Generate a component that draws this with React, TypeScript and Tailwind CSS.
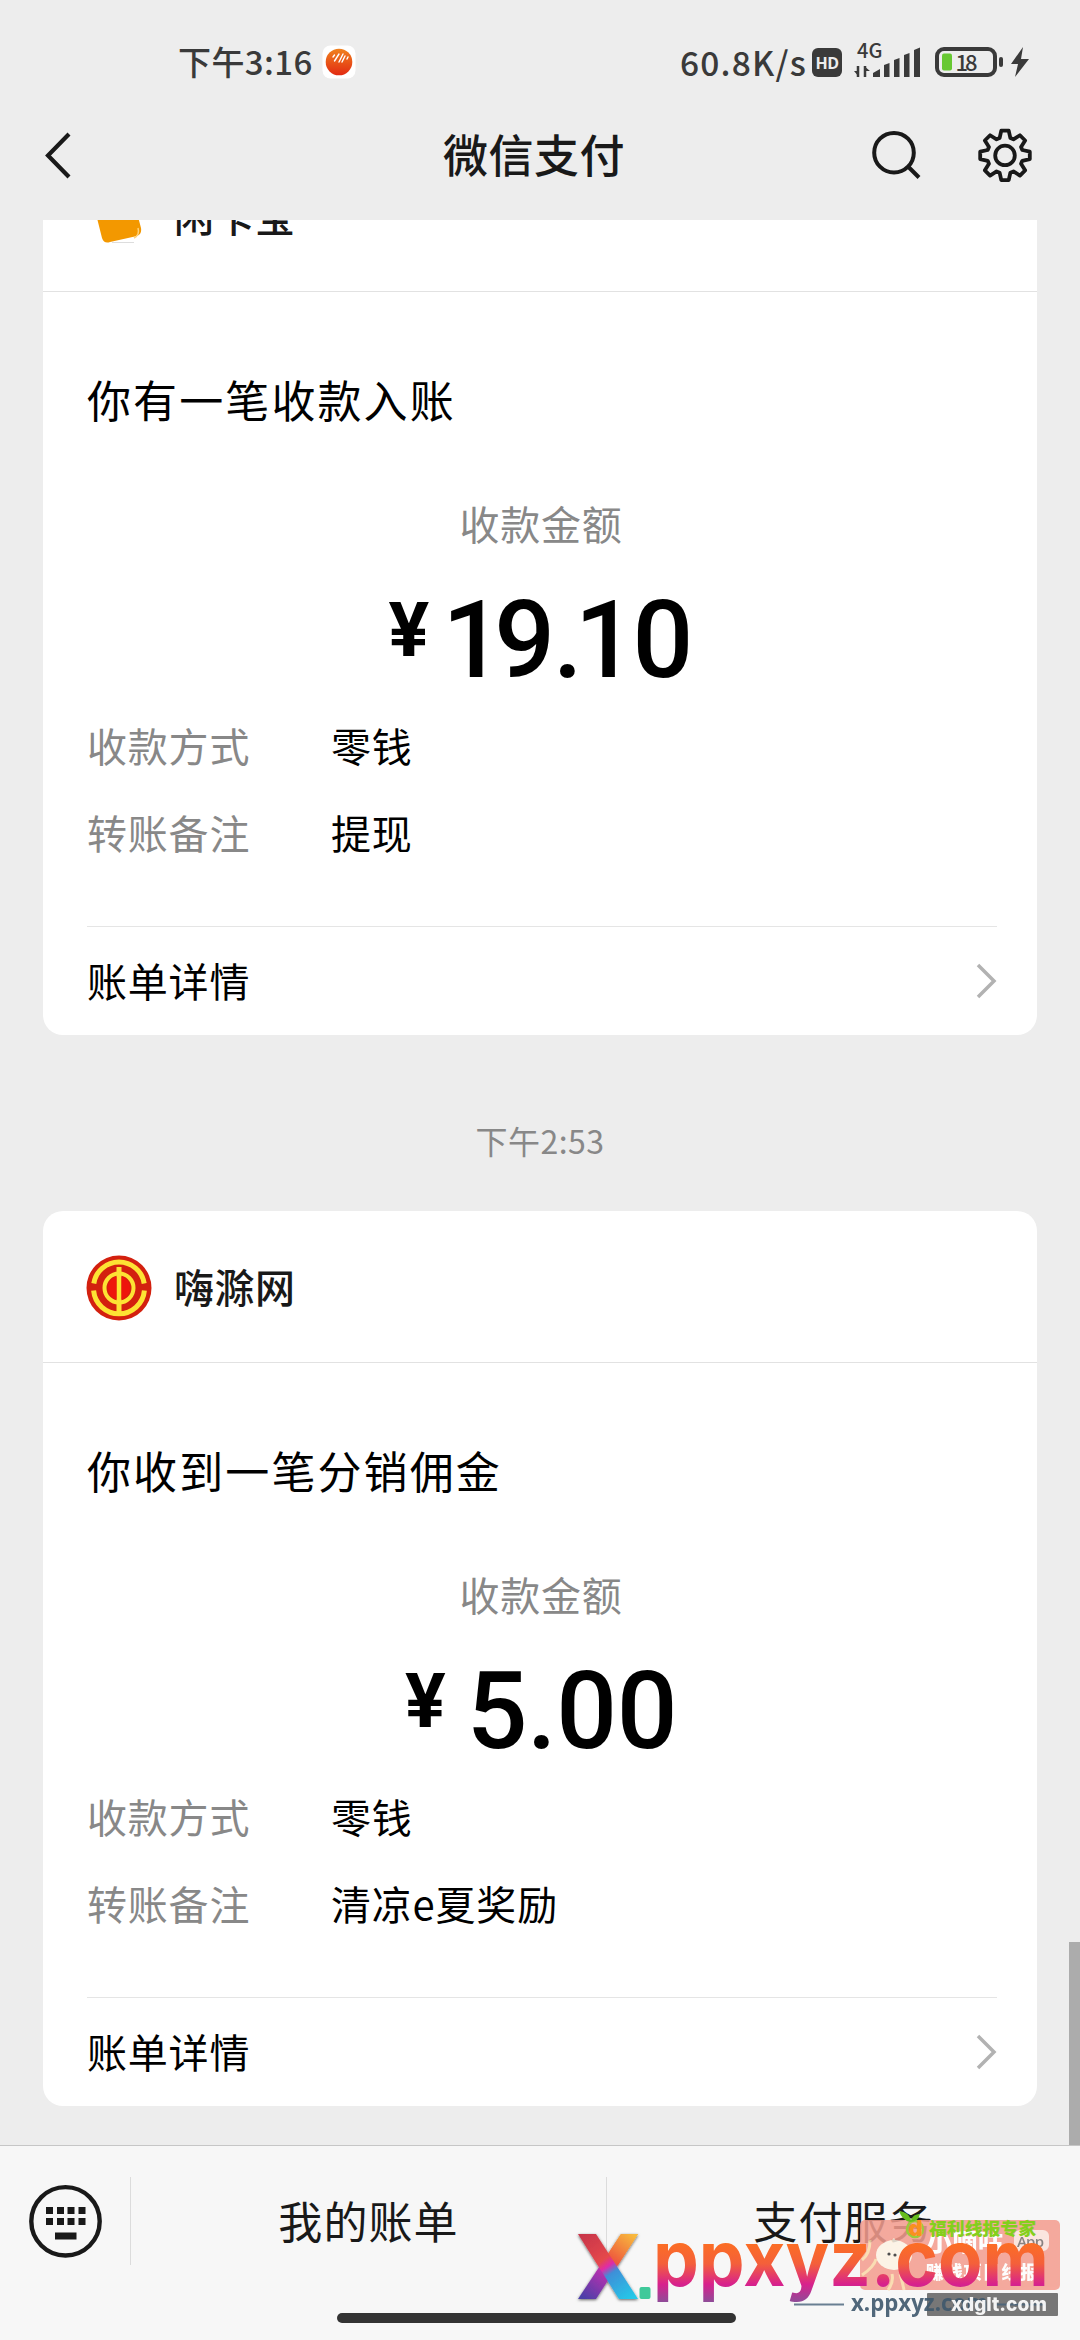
import React from "react";

const CJK = "font-['Noto_Sans_CJK_SC',sans-serif]";

const gearPoints = Array.from({ length: 8 })
  .flatMap((_, k) => {
    const a = (k * Math.PI) / 4;
    return [
      [-5.4, -17.3],
      [-3.7, -24.8],
      [3.7, -24.8],
      [5.4, -17.3],
    ].map(
      ([x, y]) =>
        `${(x * Math.cos(a) - y * Math.sin(a)).toFixed(2)},${(x * Math.sin(a) + y * Math.cos(a)).toFixed(2)}`
    );
  })
  .join(" ");

function StatusBar() {
  return (
    <div className="flex h-[110px] items-start pl-[178px] pr-[50px] pt-[40px] text-[#3a3a3a]">
      <span className="flex h-[43px] items-center text-[33px] font-medium leading-none tracking-[0.4px]">下午3:16</span>
      <svg className="ml-[9px] mt-[5px]" width="34" height="34" viewBox="0 0 34 34">
        <defs>
          <linearGradient id="ball" x1="0" y1="0" x2="0" y2="1">
            <stop offset="0" stopColor="#f0821e" />
            <stop offset="1" stopColor="#e22a12" />
          </linearGradient>
        </defs>
        <rect x="0.5" y="0.5" width="33" height="33" rx="8" fill="#fff" />
        <circle cx="17" cy="17" r="13.3" fill="url(#ball)" />
        <path d="M11 12l1.500-2M12.500 16l4.500-7M17 17l4-8M20 17l3-6M25 14l1-2" stroke="#fff" strokeWidth="1.400" strokeLinecap="round" />
      </svg>
      <div className="ml-auto flex h-[48px] items-center">
        <span className="mb-[5px] mr-[5px] text-[33.5px] font-medium leading-none tracking-[1.200px]">60.8K/s</span>
        <span className="mb-[3px] mr-[12px] flex h-[29px] w-[30px] items-center justify-center rounded-[6px] bg-[#3a3a3a] font-['Open_Sans',sans-serif] text-[16px] font-bold tracking-[-0.5px] text-[#ededed]">
          HD
        </span>
        <div className="relative mr-[14px] h-[48px] w-[67px]">
          <span className="absolute left-[3px] top-0 text-[20px] font-medium leading-[20px]">4G</span>
          <svg className="absolute left-0 top-0" width="67" height="48" viewBox="0 0 67 48" fill="#3a3a3a">
            <path d="M4 26v11M11 37V26" stroke="#3a3a3a" strokeWidth="2.500" />
            <path d="M0 31h5v6zM10 26l6 5h-6z" />
            <path d="M19 37v-4l7-4v8zM30 37V25l5.500-2v14zM40 37V20l5.500-2v19zM50 37V15l5.500-2v24zM60 37V10l6-2.500v29.500z" />
          </svg>
        </div>
        <svg width="95" height="48" viewBox="0 0 95 48">
          <rect x="2" y="9" width="58" height="26" rx="7" fill="none" stroke="#3a3a3a" strokeWidth="4" />
          <rect x="7" y="13.500" width="10" height="17" rx="2" fill="#67c832" />
          <text x="20.500" y="31" fontSize="22" fontWeight="500" fontFamily="Noto Sans CJK SC" fill="#3a3a3a" textLength="22">18</text>
          <rect x="64" y="17" width="4" height="10" rx="2" fill="#3a3a3a" />
          <path d="M88 7L76 24h7l-3 13 14-18h-8z" fill="#3a3a3a" />
        </svg>
      </div>
    </div>
  );
}

function NavBar() {
  return (
    <div className="flex h-[110px] items-start pb-0 text-[#191919]">
      <svg className="h-[92px] w-[200px]" viewBox="0 0 200 92">
        <path d="M69 24L48 45.500L69 67" fill="none" stroke="#191919" strokeWidth="4.200" />
      </svg>
      <h1 className="flex h-[87px] flex-1 items-center justify-center text-[45px] font-medium leading-none tracking-[0.5px]">
        微信支付
      </h1>
      <svg className="h-[92px] w-[212px]" viewBox="868 110 212 92" fill="none" stroke="#191919" strokeWidth="4">
        <circle cx="894" cy="152.700" r="19.800" />
        <path d="M908 166.500L919 177.500" />
        <g transform="translate(1005 155.400)" strokeWidth="3.800" strokeLinejoin="round">
          <polygon points={gearPoints} />
          <circle r="9.800" />
        </g>
      </svg>
    </div>
  );
}

function WalletLogo() {
  return (
    <svg className="mr-[2px] mt-[4px]" width="64" height="64" viewBox="0 0 64 64">
      <path d="M8 20L46 12Q52 30 55 42Q56 48 51 50L24 56Q18 58 16 52Z" fill="#f39800" />
      <path d="M48 52Q54 49 52 42" fill="none" stroke="#ffd27a" strokeWidth="1.500" />
      <path d="M26 56.500H48" stroke="#ddd" strokeWidth="1" />
    </svg>
  );
}

function UnionLogo() {
  return (
    <svg className="mt-[3px]" width="66" height="66" viewBox="-33 -33 66 66">
      <circle r="32.500" fill="#d3200f" />
      <g fill="none" stroke="#fde334">
        <path d="M-25.200 -4.500A25.500 25.500 0 0 1 25.200 -4.500" strokeWidth="5" />
        <path d="M-25.400 2.500A25.500 25.500 0 0 0 25.400 2.500" strokeWidth="5" />
        <circle r="14.500" strokeWidth="4" />
        <path d="M0 -21V26" strokeWidth="5" />
      </g>
      <path d="M-2.500 -11.500A12 12 0 0 0 -2.500 11.500zM2.500 -11.500A12 12 0 0 1 2.500 11.500z" fill="#ee150c" />
    </svg>
  );
}

type CardProps = {
  logo: React.ReactNode;
  name: string;
  title: string;
  amount: React.ReactNode;
  note: string;
  className: string;
};

function Row({ label, value, className }: { label: string; value: string; className: string }) {
  return (
    <div className={`flex h-[60px] items-center text-[40px] leading-none tracking-[0.8px] ${className}`}>
      <span className="w-[244px] text-[#888]">{label}</span>
      <span className="text-black">{value}</span>
    </div>
  );
}

function PayCard({ logo, name, title, amount, note, className }: CardProps) {
  return (
    <section className={`mx-[43px] flex h-[895px] shrink-0 flex-col rounded-[20px] bg-white ${className}`}>
      <header className="flex h-[152px] shrink-0 items-center border-b border-[#e2e2e2] pl-[43px]">
        {logo}
        <span className="mb-[1px] ml-[22px] text-[40px] font-medium leading-none tracking-[0.500px] text-[#191919]">{name}</span>
      </header>
      <div className="flex flex-1 flex-col pl-[44px] pr-[40px]">
        <h2 className="mt-[77px] flex h-[60px] items-center text-[44px] leading-none tracking-[2.100px] text-black">{title}</h2>
        <p className="mt-[64px] flex h-[60px] items-center justify-center pr-[2px] text-[40px] leading-none tracking-[0.800px] text-[#888]">
          收款金额
        </p>
        <div className="mt-[35px] flex h-[106px] items-start justify-center pr-[2px] font-['Roboto',sans-serif] font-medium text-black">
          {amount}
        </div>
        <Row label="收款方式" value="零钱" className="mt-[21px]" />
        <Row label="转账备注" value={note} className="mt-[27px]" />
        <footer className="mt-[64px] flex h-[109px] items-center justify-between border-t border-[#e5e5e5] text-[40px] leading-none tracking-[0.800px] text-black">
          <span className="pb-[2px]">账单详情</span>
          <svg width="22" height="36" viewBox="0 0 22 36">
            <path d="M3 2L19 18L3 34" fill="none" stroke="#b2b2b2" strokeWidth="3.500" />
          </svg>
        </footer>
      </div>
    </section>
  );
}

function Yen({ className }: { className: string }) {
  return <span className={`pt-[4px] text-[76px] font-bold leading-[76px] ${className}`}>¥</span>;
}

function BottomBar() {
  const keys = [46, 57, 67.500, 78.500];
  return (
    <nav className="flex h-[195px] shrink-0 items-start border-t border-[#c6c6c6] bg-[#f7f7f7] pt-[31px] text-[44px] leading-none tracking-[1.100px] text-[#191919]">
      <svg width="130" height="88" viewBox="0 2177 130 88" fill="#191919">
        <circle cx="65.500" cy="2221.300" r="34.200" fill="none" stroke="#191919" strokeWidth="4.400" />
        {keys.map((x) => (
          <React.Fragment key={x}>
            <rect x={x} y="2207" width="7" height="7" />
            <rect x={x} y="2218" width="7" height="7" />
          </React.Fragment>
        ))}
        <rect x="55" y="2232.500" width="21.500" height="7" />
      </svg>
      <div className="flex h-[88px] w-[476px] items-center justify-center border-l border-[#dcdcdc] pb-[3px]">我的账单</div>
      <div className="flex h-[88px] flex-1 items-center justify-center border-l border-[#dcdcdc] pb-[3px]">支付服务</div>
    </nav>
  );
}

function Watermark() {
  return (
    <svg className="absolute bottom-0 right-0" width="510" height="140" viewBox="570 2200 510 140">
      <defs>
        <linearGradient id="sunset" gradientUnits="userSpaceOnUse" x1="0" y1="2243" x2="0" y2="2302">
          <stop offset="0" stopColor="#fc6e24" />
          <stop offset="0.350" stopColor="#f4603a" />
          <stop offset="0.700" stopColor="#d8218d" />
          <stop offset="1" stopColor="#8e4c98" />
        </linearGradient>
        <filter id="shade" x="-20%" y="-20%" width="140%" height="140%">
          <feDropShadow dx="0" dy="1" stdDeviation="1.500" floodOpacity="0.600" />
        </filter>
        <linearGradient id="xa" gradientUnits="userSpaceOnUse" x1="585" y1="2234" x2="630" y2="2299">
          <stop offset="0" stopColor="#c9364a" />
          <stop offset="0.400" stopColor="#e5484c" />
          <stop offset="0.500" stopColor="#e02ba8" />
          <stop offset="0.600" stopColor="#3e8fd8" />
          <stop offset="1" stopColor="#25c8e8" />
        </linearGradient>
        <linearGradient id="xb" gradientUnits="userSpaceOnUse" x1="632" y1="2234" x2="585" y2="2299">
          <stop offset="0" stopColor="#f8b93c" />
          <stop offset="0.400" stopColor="#ee5a3c" />
          <stop offset="0.550" stopColor="#c42fb0" />
          <stop offset="1" stopColor="#4b3fa8" />
        </linearGradient>
      </defs>
      <g opacity="0.860">
        <rect x="860" y="2220" width="200" height="70" rx="5" fill="#f49d8f" />
        <path d="M862 2260q8-6 8-20M862 2275q12-8 14-16M888 2290q6-8 4-16M904 2290q-2-10-4-16" stroke="#fbd9a8" strokeWidth="3" fill="none" />
        <ellipse cx="894" cy="2255" rx="18" ry="15" fill="#fdf3e4" />
        <path d="M888 2244l6-6 4 6z" fill="#fdf3e4" />
        <circle cx="889" cy="2254" r="1.600" fill="#333" />
        <circle cx="895" cy="2255" r="1.600" fill="#333" />
        <rect x="1014" y="2230" width="35" height="21" rx="6" fill="#fbe3dc" />
        <g fontFamily="Noto Sans CJK SC" fontWeight="900" fill="#fff">
          <text x="927" y="2251" fontSize="25" textLength="76">小嘀咕</text>
          <text x="926" y="2279" fontSize="18" textLength="112">赚钱项目线报</text>
        </g>
        <text x="1017" y="2247" fontSize="15" fontFamily="Open Sans" fontWeight="600" fill="#77706e" textLength="27">App</text>
      </g>
      <circle cx="915" cy="2229" r="8" fill="none" stroke="#9ccb3b" strokeWidth="2.500" />
      <text x="908.500" y="2236" fontFamily="Inter" fontWeight="900" fontSize="22" fill="#f9901e" textLength="14" lengthAdjust="spacingAndGlyphs">d</text>
      <path d="M899 2211q10 1 12 9q2-6 9-6q-2 8-10 8q-8-2-11-11z" fill="#66bd1d" />
      <text x="929" y="2235" fontFamily="Noto Sans CJK SC" fontWeight="900" fontSize="17.500" fill="#84cf1c" textLength="107" lengthAdjust="spacingAndGlyphs">
        福利线报专家
      </text>
      <rect x="927" y="2293" width="131" height="23" rx="1" fill="#777" />
      <path d="M794 2304.500h50M996 2304.500h50" stroke="#46627a" strokeWidth="1.800" opacity="0.800" />
      <text x="851" y="2310.500" fontFamily="Open Sans" fontWeight="700" fontSize="23" fill="#3f586d" opacity="0.900" textLength="137" lengthAdjust="spacingAndGlyphs">x.ppxyz.com</text>
      <text x="951" y="2310.500" fontFamily="Inter" fontWeight="800" fontSize="19" fill="#fff" opacity="0.920" textLength="96" lengthAdjust="spacingAndGlyphs">xdglt.com</text>
      <g filter="url(#shade)">
        <path d="M621 2234h17l-42 65h-18z" fill="url(#xb)" />
        <path d="M578 2234h18l42 65h-19z" fill="url(#xa)" />
        <path d="M621 2234h17l-20 31-8-14z" fill="url(#xb)" />
      </g>
      <rect x="639.500" y="2287" width="11" height="12" rx="2" fill="#3fc99a" />
      <text x="653" y="2286" fontFamily="Inter" fontWeight="700" fontSize="77" fill="url(#sunset)" textLength="396" lengthAdjust="spacingAndGlyphs">ppxyz.com</text>
    </svg>
  );
}

export default function App() {
  return (
    <div className={`relative flex h-[2340px] w-[1080px] flex-col overflow-hidden bg-[#ededed] ${CJK}`}>
      <StatusBar />
      <NavBar />
      <main className="relative flex h-[1925px] shrink-0 flex-col overflow-hidden">
        <PayCard
          className="-mt-[80px]"
          logo={<WalletLogo />}
          name="闲卡宝"
          title="你有一笔收款入账"
          note="提现"
          amount={
            <>
              <Yen className="mr-[13px]" />
              <span className="text-[107px] leading-[106px]">
                <span className="-mr-[9px]">1</span>9<span className="-ml-[2px]">.</span>
                <span className="-ml-[8px] -mr-[3px]">1</span>0
              </span>
            </>
          }
        />
        <time className="mt-[75px] flex h-[60px] shrink-0 items-center justify-center text-[32px] leading-none tracking-[0.500px] text-[#888]">
          下午2:53
        </time>
        <PayCard
          className="mt-[41px]"
          logo={<UnionLogo />}
          name="嗨滁网"
          title="你收到一笔分销佣金"
          note="清凉e夏奖励"
          amount={
            <>
              <Yen className="mr-[21px]" />
              <span className="text-[107px] leading-[106px] tracking-[-0.5px]">5.00</span>
            </>
          }
        />
        <div className="absolute bottom-0 right-0 h-[203px] w-[11px] bg-[#acacac]" />
      </main>
      <BottomBar />
      <div className="absolute bottom-[17px] left-[337px] h-[10px] w-[399px] rounded-full bg-[#333]" />
      <Watermark />
    </div>
  );
}
